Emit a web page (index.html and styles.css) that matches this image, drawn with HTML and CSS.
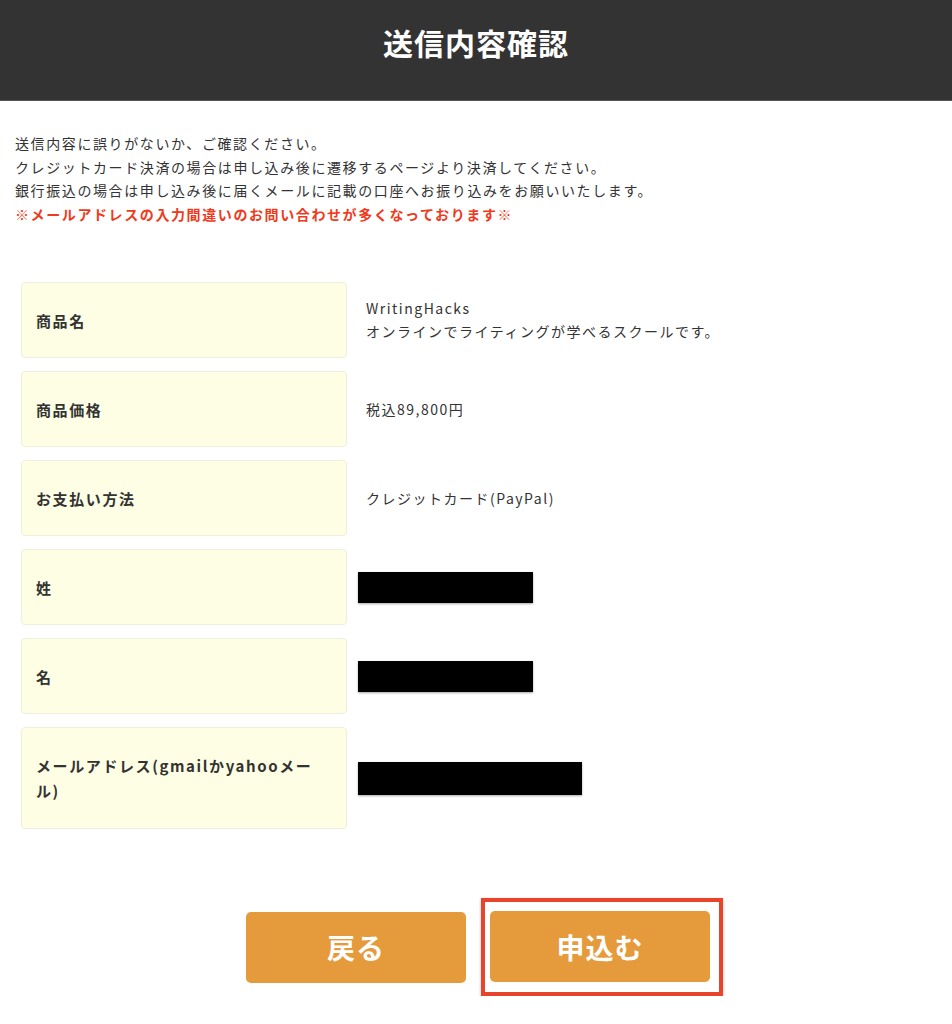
FILE: index.html
```html
<!DOCTYPE html>
<html lang="ja">
<head>
  <meta charset="UTF-8">
  <meta name="viewport" content="width=device-width, initial-scale=1.0">
  <title>送信内容確認</title>
  <link rel="stylesheet" href="styles.css">
</head>
<body>
  <header class="page-header">
    <h1>送信内容確認</h1>
  </header>

  <div class="intro">
    <p>送信内容に誤りがないか、ご確認ください。</p>
    <p>クレジットカード決済の場合は申し込み後に遷移するページより決済してください。</p>
    <p>銀行振込の場合は申し込み後に届くメールに記載の口座へお振り込みをお願いいたします。</p>
    <p class="warning">※メールアドレスの入力間違いのお問い合わせが多くなっております※</p>
  </div>

  <div class="confirm-table">
    <div class="row">
      <div class="label">商品名</div>
      <div class="value">WritingHacks<br>オンラインでライティングが学べるスクールです。</div>
    </div>
    <div class="row">
      <div class="label">商品価格</div>
      <div class="value">税込89,800円</div>
    </div>
    <div class="row">
      <div class="label">お支払い方法</div>
      <div class="value">クレジットカード(PayPal)</div>
    </div>
    <div class="row">
      <div class="label">姓</div>
      <div class="value redacted"><span class="mask"></span></div>
    </div>
    <div class="row">
      <div class="label">名</div>
      <div class="value redacted"><span class="mask"></span></div>
    </div>
    <div class="row tall">
      <div class="label">メールアドレス(gmailかyahooメール)</div>
      <div class="value redacted"><span class="mask wide"></span></div>
    </div>
  </div>

  <div class="actions">
    <button class="btn">戻る</button>
    <span class="highlight"><button class="btn">申込む</button></span>
  </div>
</body>
</html>
```

FILE: styles.css
```css
body {
  margin: 0;
  font-family: "Noto Sans CJK JP", "Noto Sans", sans-serif;
  color: #333;
  background: #fff;
}
.page-header {
  background: #333;
  height: 101px;
  box-sizing: border-box;
  padding-top: 21px;
  border-bottom: 1px solid #555;
  text-align: center;
}
.page-header h1 {
  margin: 0;
  color: #fff;
  font-size: 30px;
  line-height: 42px;
  font-weight: bold;
  letter-spacing: 1px;
}
.intro {
  padding: 31px 15px 0;
  font-size: 14px;
  line-height: 23.5px;
  letter-spacing: 1.6px;
}
.intro p {
  margin: 0;
}
.intro .warning {
  color: #f03a20;
  font-weight: bold;
}
.confirm-table {
  margin-top: 56px;
  padding-left: 21px;
  display: flex;
  flex-direction: column;
  gap: 13px;
}
.row {
  display: flex;
  align-items: center;
  min-height: 76px;
}
.row.tall {
  min-height: 102px;
}
.label {
  width: 326px;
  align-self: stretch;
  box-sizing: border-box;
  display: flex;
  align-items: center;
  padding: 0 30px 0 14px;
  background: #fefee4;
  border: 1px solid #efefe0;
  border-radius: 4px;
  font-size: 15px;
  font-weight: bold;
  line-height: 25px;
  letter-spacing: 1.6px;
}
.value {
  padding-left: 19px;
  font-size: 14px;
  line-height: 23px;
  letter-spacing: 1.5px;
}
.value.redacted {
  padding-left: 11px;
  display: flex;
}
.mask {
  display: inline-block;
  width: 175px;
  height: 31px;
  background: #000;
  box-shadow: 0 1px 2px rgba(0, 0, 0, 0.35);
}
.mask.wide {
  width: 224px;
  height: 33px;
}
.actions {
  margin-top: 69px;
  display: flex;
  justify-content: center;
  align-items: center;
  gap: 15px;
  padding-left: 17px;
}
.btn {
  width: 220px;
  height: 71px;
  border: none;
  border-radius: 5px;
  background: #e59a3c;
  color: #fff;
  font-family: inherit;
  font-size: 28px;
  font-weight: bold;
  letter-spacing: 1px;
  cursor: pointer;
}
.highlight {
  display: inline-block;
  border: 4px solid #e8432b;
  padding: 9px 9px 10px 5px;
  box-shadow: 0 1px 3px rgba(0, 0, 0, 0.25);
}
.highlight .btn {
  display: block;
}
```
